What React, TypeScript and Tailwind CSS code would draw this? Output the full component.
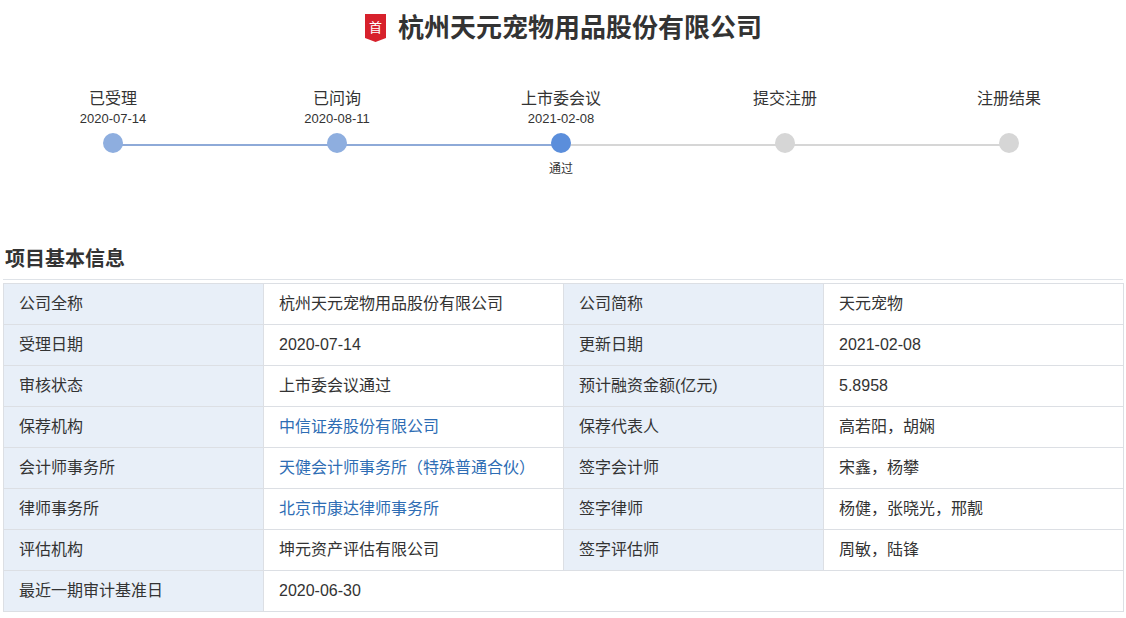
const steps = [
  { label: '已受理', date: '2020-07-14', state: 'done' },
  { label: '已问询', date: '2020-08-11', state: 'done' },
  { label: '上市委会议', date: '2021-02-08', state: 'current', note: '通过' },
  { label: '提交注册', date: '', state: 'todo' },
  { label: '注册结果', date: '', state: 'todo' },
]

type Cell = { text: string; link?: boolean }

const rows: [Cell, Cell, Cell?, Cell?][] = [
  [{ text: '公司全称' }, { text: '杭州天元宠物用品股份有限公司' }, { text: '公司简称' }, { text: '天元宠物' }],
  [{ text: '受理日期' }, { text: '2020-07-14' }, { text: '更新日期' }, { text: '2021-02-08' }],
  [{ text: '审核状态' }, { text: '上市委会议通过' }, { text: '预计融资金额(亿元)' }, { text: '5.8958' }],
  [{ text: '保荐机构' }, { text: '中信证券股份有限公司', link: true }, { text: '保荐代表人' }, { text: '高若阳，胡娴' }],
  [{ text: '会计师事务所' }, { text: '天健会计师事务所（特殊普通合伙）', link: true }, { text: '签字会计师' }, { text: '宋鑫，杨攀' }],
  [{ text: '律师事务所' }, { text: '北京市康达律师事务所', link: true }, { text: '签字律师' }, { text: '杨健，张晓光，邢靓' }],
  [{ text: '评估机构' }, { text: '坤元资产评估有限公司' }, { text: '签字评估师' }, { text: '周敏，陆锋' }],
  [{ text: '最近一期审计基准日' }, { text: '2020-06-30' }],
]

function Badge() {
  return (
    <svg width="21" height="28" viewBox="0 0 21 28" className="shrink-0">
      <path d="M0 0H21V24L10.5 28L0 24Z" fill="#d7212c" />
      <text x="10.5" y="18" textAnchor="middle" fontSize="13" fill="#fff" fontFamily="'Noto Sans CJK SC', sans-serif">
        首
      </text>
    </svg>
  )
}

function Value({ cell }: { cell: Cell }) {
  return cell.link ? <span className="text-[#2e6db4]">{cell.text}</span> : <span>{cell.text}</span>
}

export default function App() {
  return (
    <div
      className="min-h-screen w-[1126px] bg-white text-[#333]"
      style={{ fontFamily: "'Liberation Sans', 'Noto Sans CJK SC', sans-serif" }}
    >
      <div className="flex h-[56px] items-center justify-center gap-[12px] pl-[1px]">
        <Badge />
        <h1 className="text-[26px] font-bold leading-none text-[#333]">杭州天元宠物用品股份有限公司</h1>
      </div>

      <div className="relative mt-[32px] ml-[1px] grid w-[1120px] grid-cols-5">
        <div className="absolute top-[56px] left-[112px] h-[2px] w-[896px] bg-[#d6d6d6]" />
        <div className="absolute top-[56px] left-[112px] h-[2px] w-[449px] bg-[#8eaad8]" />
        {steps.map((s) => (
          <div key={s.label} className="relative flex flex-col items-center">
            <div className="h-[22px] text-[16px] leading-[22px]">{s.label}</div>
            <div className="h-[18px] text-[13px] leading-[18px]">{s.date}</div>
            <div
              className={
                'mt-[5px] h-[20px] w-[20px] rounded-full ' +
                (s.state === 'done' ? 'bg-[#8eaedf]' : s.state === 'current' ? 'bg-[#5b8edb]' : 'bg-[#d6d6d6]')
              }
            />
            <div className="mt-[8px] h-[16px] text-[12px] leading-[16px]">{s.note ?? ''}</div>
          </div>
        ))}
      </div>

      <div className="mx-[3px] mt-[68px] w-[1120px]">
        <h2 className="border-b border-[#dfe3e8] pb-[6px] pl-[2px] text-[20px] leading-[28px] font-bold text-[#333]">
          项目基本信息
        </h2>
        <table className="mt-[3px] w-[1120px] table-fixed border-collapse text-[16px] text-[#333]">
          <colgroup>
            <col className="w-[260px]" />
            <col className="w-[300px]" />
            <col className="w-[260px]" />
            <col className="w-[300px]" />
          </colgroup>
          <tbody>
            {rows.map((r, i) => (
              <tr key={i} className="h-[41px]">
                <td className="border border-[#dcdfe4] bg-[#e8eff8] px-[15px] py-0">{r[0].text}</td>
                {r[2] ? (
                  <>
                    <td className="border border-[#dcdfe4] px-[15px] py-0">
                      <Value cell={r[1]} />
                    </td>
                    <td className="border border-[#dcdfe4] bg-[#e8eff8] px-[15px] py-0">{r[2].text}</td>
                    <td className="border border-[#dcdfe4] px-[15px] py-0">
                      <Value cell={r[3]!} />
                    </td>
                  </>
                ) : (
                  <td colSpan={3} className="border border-[#dcdfe4] px-[15px] py-0">
                    <Value cell={r[1]} />
                  </td>
                )}
              </tr>
            ))}
          </tbody>
        </table>
      </div>
    </div>
  )
}
